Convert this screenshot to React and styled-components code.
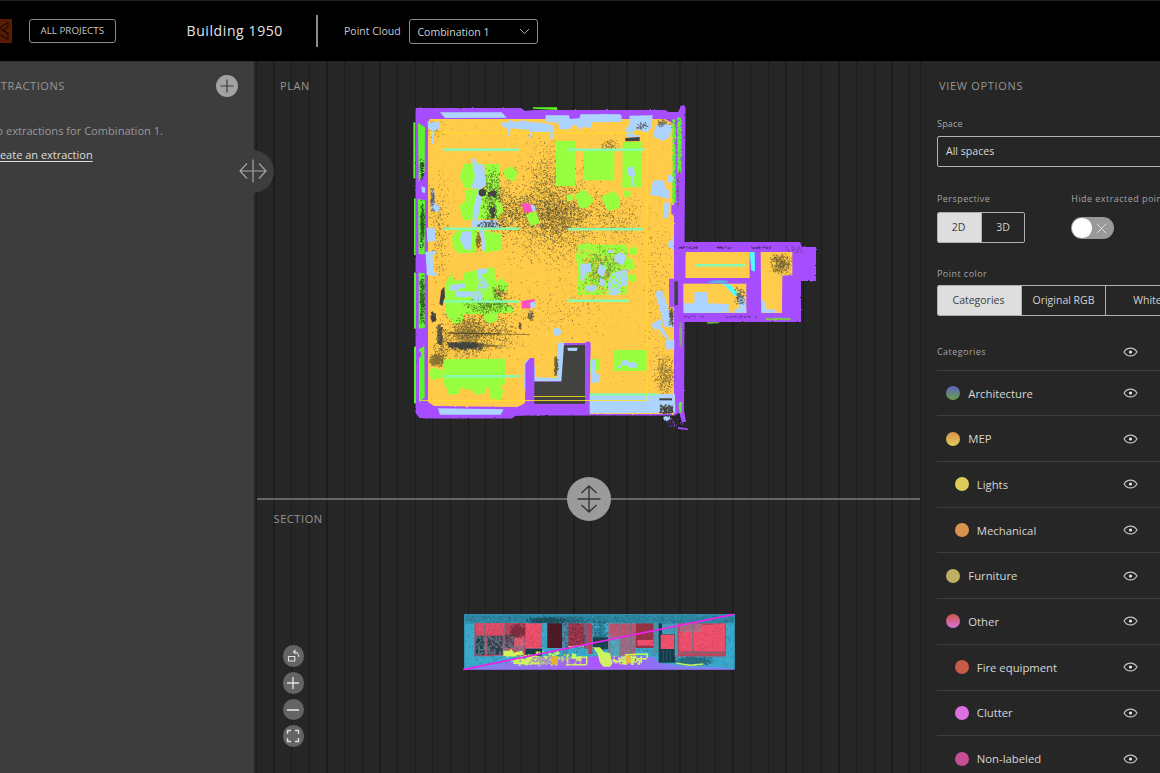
import React from "react";
import styled, { createGlobalStyle, css } from "styled-components";

const Global = createGlobalStyle`
  * { box-sizing: border-box; }
  html, body { margin: 0; background: #262626; overflow: hidden; }
  body { font-family: "Open Sans", "Noto Sans", sans-serif; color: #d6d6d6; }
  button { font: inherit; color: inherit; background: none; border: 0; padding: 0; }
  svg { display: block; }
`;

const Page = styled.div`
  width: 1160px;
  height: 773px;
  overflow: hidden;
  display: flex;
  flex-direction: column;
`;

/* ---------- header ---------- */
const Header = styled.header`
  flex: none;
  height: 61px;
  padding-bottom: 1px;
  background: #000;
  border-top: 1px solid #1f2020;
  display: flex;
  align-items: center;
`;
const LogoTile = styled.div`
  width: 12px;
  height: 24px;
  background: #591b02;
  margin-right: 17px;
  margin-top: 1px;
`;
const ProjectsButton = styled.button`
  width: 86.5px;
  height: 24px;
  border: 1px solid #8a8a8a;
  border-radius: 3px;
  font-size: 9.8px;
  letter-spacing: 0;
  white-space: nowrap;
  color: #c6c6c6;
`;
const ProjectTitle = styled.h1`
  margin: 0 0 0 71px;
  width: 129.5px;
  font-size: 14px;
  font-weight: 400;
  letter-spacing: 0.6px;
  white-space: nowrap;
  color: #e4e4e4;
`;
const HeaderRule = styled.div`
  width: 1.5px;
  height: 32px;
  margin-top: 1px;
  background: #8b8b8b;
`;
const HeaderLabel = styled.span`
  margin-left: 26.5px;
  width: 65px;
  font-size: 10.5px;
  white-space: nowrap;
  color: #c8c8c8;
`;
const CloudSelect = styled.button`
  width: 129px;
  height: 25px;
  margin-top: 1px;
  padding: 1px 7px 0 7.5px;
  border: 1px solid #8a8a8a;
  border-radius: 3px;
  display: flex;
  align-items: center;
  justify-content: space-between;
  font-size: 10.5px;
  color: #d2d2d2;
`;

/* ---------- body ---------- */
const Body = styled.div`
  flex: 1;
  min-height: 0;
  display: grid;
  grid-template-columns: 253.5px 667.5px 1fr;
`;
const Sidebar = styled.aside`
  position: relative;
  z-index: 2;
  background: #3d3d3d;
  border-top: 1px solid #353535;
`;
const SidebarHead = styled.div`
  height: 48px;
  padding: 0 16px 0 0;
  display: flex;
  align-items: center;
  justify-content: space-between;
`;
const PanelTitle = styled.h2`
  margin: 0;
  font-size: 11px;
  font-weight: 400;
  letter-spacing: 0.6px;
  line-height: 15px;
  white-space: nowrap;
  color: #969696;
`;
const ClippedTitle = styled(PanelTitle)`
  margin: -1px 0 0 -12.8px;
`;
const AddButton = styled.button`
  width: 22px;
  height: 22px;
  border-radius: 50%;
  background: #a2a2a2;
  display: grid;
  place-items: center;
`;
const EmptyNote = styled.p`
  margin: 13px 0 0 -12px;
  font-size: 11.1px;
  line-height: 16px;
  white-space: nowrap;
  color: #999;
`;
const CreateLink = styled.a`
  display: block;
  margin: 8px 0 0 -11.5px;
  width: max-content;
  font-size: 11px;
  line-height: 16px;
  text-decoration: underline;
  text-underline-offset: 2px;
  color: #dcdcdc;
`;
const SidebarHandle = styled.div`
  position: absolute;
  right: -20.5px;
  top: 87.5px;
  width: 43px;
  height: 43px;
  border-radius: 50%;
  background: #3d3d3d;
  display: grid;
  place-items: center;
`;

const Canvas = styled.main`
  position: relative;
  display: flex;
  flex-direction: column;
  background: repeating-linear-gradient(90deg, #262626 0 1.6px, #1c1c1c 1.6px 2.9px, #262626 2.9px 17.66px);
  border-right: 1px solid #1c1c1c;
`;
const PlanView = styled.section`
  height: 436.6px;
  padding: 17px 0 0 26.5px;
`;
const SectionView = styled.section`
  flex: 1;
  padding: 11.4px 0 0 20px;
`;
const PlanDrawing = styled.svg`
  width: 410px;
  height: 335px;
  margin: 7px 0 0 130px;
`;
const SectionDrawing = styled.svg`
  width: 280px;
  height: 64px;
  margin: 83.6px 0 0 186.5px;
`;
const Divider = styled.div`
  height: 2px;
  margin-left: 3px;
  background: #666;
  display: flex;
  align-items: center;
  justify-content: center;
  padding-left: 2px;
`;
const DividerKnob = styled.div`
  flex: none;
  width: 44px;
  height: 44px;
  border-radius: 50%;
  background: #9b9b9b;
  display: grid;
  place-items: center;
`;
const ZoomTools = styled.div`
  position: absolute;
  left: 29px;
  bottom: 26px;
  display: flex;
  flex-direction: column;
  gap: 5.1px;
`;
const ZoomButton = styled.button`
  width: 21.6px;
  height: 21.6px;
  border-radius: 50%;
  background: #646464;
  display: grid;
  place-items: center;
`;

/* ---------- view options ---------- */
const Options = styled.aside`
  padding: 17px 0 0 16px;
  background: #262626;
  overflow: hidden;
  white-space: nowrap;
`;
const OptionsTitle = styled(PanelTitle)`
  margin-left: 2px;
  letter-spacing: 0.68px;
`;
const FieldLabel = styled.div`
  font-size: 9px;
  line-height: 12px;
  letter-spacing: ${(p) => p.$spacing || "0.45px"};
  color: #a4a4a4;
`;
const SpaceField = styled.div`
  margin-top: 25px;
`;
const SpaceSelect = styled.div`
  margin-top: 6px;
  width: 260px;
  height: 30.5px;
  padding-left: 8px;
  border: 1px solid #b3b3b3;
  border-radius: 2px;
  font-size: 10.6px;
  line-height: 28px;
  color: #d8d8d8;
`;
const PairRow = styled.div`
  display: grid;
  grid-template-columns: 134.3px 1fr;
  margin-top: 26.5px;
`;
const ColorField = styled.div`
  margin-top: 25.5px;
`;
const Segmented = styled.div`
  margin-top: ${(p) => p.$top};
  width: max-content;
  height: 30.5px;
  display: flex;
  border: 1px solid #b0b0b0;
  border-radius: 2px;
  overflow: hidden;
`;
const Segment = styled.button`
  width: ${(p) => p.$w}px;
  padding-bottom: 1px;
  font-size: 10.5px;
  color: #d2d2d2;
  & + & { border-left: 1px solid #b0b0b0; }
  ${(p) => p.$on && css`
    background: #dedede;
    color: #3d3d3d;
    padding-right: 2px;
  `}
`;
const Toggle = styled.div`
  margin-top: 12px;
  width: 43px;
  height: 22px;
  padding: 0 7px 0 1px;
  border-radius: 11px;
  background: #999;
  display: flex;
  align-items: center;
  justify-content: space-between;
`;
const ToggleKnob = styled.span`
  width: 19.5px;
  height: 19.5px;
  border-radius: 50%;
  background: #fff;
`;
const CategoryHead = styled.div`
  height: 54.2px;
  padding: 18px 24px 0 0;
  display: flex;
  align-items: center;
  justify-content: space-between;
  width: 224.5px;
`;
const CategoryRow = styled.div`
  height: 45.7px;
  width: 230.5px;
  padding: 0 30px 0 ${(p) => (p.$nested ? 17.5 : 9)}px;
  border-top: 1px solid #3e3e3e;
  display: flex;
  align-items: center;
  font-size: 11.3px;
  color: #d6d6d6;
`;
const Swatch = styled.span`
  width: 14px;
  height: 14px;
  margin-right: 8.3px;
  border-radius: 50%;
  background: ${(p) => p.$fill};
`;
const CategoryName = styled.span`
  flex: 1;
`;

const Eye = () => (
  <svg width="15" height="10" viewBox="0 0 15 10" fill="none" stroke="#c4c4c4" strokeWidth="1.15">
    <path d="M1 5C2.6 2.3 4.8 1.1 7.5 1.1S12.4 2.3 14 5C12.4 7.7 10.2 8.9 7.5 8.9S2.6 7.7 1 5Z" />
    <circle cx="7.5" cy="5" r="1.6" fill="#e8e8e8" stroke="none" />
  </svg>
);

const categories = [
  { name: "Architecture", fill: "linear-gradient(#5b63c4, #6ba048)" },
  { name: "MEP", fill: "linear-gradient(#dc914b, #e2cb57)" },
  { name: "Lights", fill: "#decb57", nested: true },
  { name: "Mechanical", fill: "#da924f", nested: true },
  { name: "Furniture", fill: "#c0ae61" },
  { name: "Other", fill: "linear-gradient(#ca5947, #d970dc)" },
  { name: "Fire equipment", fill: "#c75a48", nested: true },
  { name: "Clutter", fill: "#dc70e0", nested: true },
  { name: "Non-labeled", fill: "#c64f94", nested: true },
];

/* ---------- point cloud scatter ---------- */
function rng(seed) {
  let s = seed;
  return () => {
    s = (s * 1664525 + 1013904223) % 4294967296;
    return s / 4294967296;
  };
}
// Scatter n small points, denser towards the middle of the box unless flat.
function scatter(seed, n, x, y, w, h, size = 1, flat = false) {
  const r = rng(seed);
  let d = "";
  for (let i = 0; i < n; i++) {
    const u = flat ? r() : (r() + r()) / 2;
    const v = flat ? r() : (r() + r()) / 2;
    const s = size * (0.6 + r() * 0.7);
    d += `M${(x + u * w).toFixed(1)} ${(y + v * h).toFixed(1)}h${s.toFixed(1)}v${s.toFixed(1)}h-${s.toFixed(1)}z`;
  }
  return d;
}

const P = "#a64dff", Y = "#ffcb4a", G = "#97ff40", L = "#add4ff", M = "#87fbb0", D = "#424341", N = "#5cf52a";
const Poly = ({ c, p }) => <polygon fill={c} points={p} />;
const Box = ({ c, b, o }) => <rect fill={c} x={b[0]} y={b[1]} width={b[2]} height={b[3]} opacity={o} />;

// [count, x, y, width, height, point size]
const voids = [
  [1700, 498, 155, 105, 110, 0.85], [900, 528, 190, 66, 52, 0.9], [900, 480, 190, 80, 45, 0.85],
  [480, 478, 160, 40, 90, 0.85], [500, 524, 130, 50, 90, 0.8], [300, 427, 170, 24, 120, 0.8],
  [500, 495, 215, 160, 60, 0.7], [420, 430, 275, 115, 90, 0.8], [800, 440, 308, 80, 46, 0.9],
  [260, 432, 325, 20, 45, 0.9], [260, 641, 190, 32, 200, 0.7], [420, 652, 352, 25, 46, 0.85],
  [60, 425, 118, 20, 20, 0.8], [90, 600, 138, 20, 15, 0.9], [80, 652, 117, 25, 18, 0.8],
  [240, 520, 270, 90, 75, 0.7], [180, 590, 190, 30, 45, 0.8], [300, 600, 195, 45, 50, 0.7],
];

function Plan() {
  return (
    <PlanDrawing viewBox="410 100 410 335">
      <defs>
        <filter id="rough" x="-2%" y="-2%" width="104%" height="104%">
          <feTurbulence type="fractalNoise" baseFrequency="0.35" numOctaves="2" seed="4" />
          <feDisplacementMap in="SourceGraphic" scale="2" xChannelSelector="R" yChannelSelector="G" />
        </filter>
      </defs>
      <g filter="url(#rough)">
        <Poly c={P} p="415.5,108 521,108 525,111 534,110 665,110 669,112 678,112 681,106 684,105 685.5,108 684.5,242 800,242 802,247 816,247 816,281 801,281 801,322 684.5,322 684,410 686,422 682,422 679,413 674,415.5 527,415.5 515,416 512,418.5 420,418.5 415.5,413" />
        <Poly c={P} p="678,427 688,428.5 688,430 678,429" />
        <Poly c={Y} p="430,119 665,119 674,124 674,414 590,414 590,343 563,343 563,381 525,381 525,403 518,407 434,406 428,402 428,122" />
      </g>
      <path d={scatter(71, 1300, 429, 123, 244, 280, 0.7, true)} fill="#8a7434" opacity=".5" />
      {voids.map(([n, x, y, w, h, s], i) => (
        <path key={i} d={scatter(i * 977 + 13, n, x, y, w, h, s)} fill="#39372d" opacity=".62" />
      ))}

      <g transform="translate(400 95) scale(.33333)">
        <Poly c={L} p="120,52 305,52 320,68 135,69" />
        <Poly c={L} p="83,83 118,80 118,102 103,105 101,147 96,147 94,105 84,100" />
        <Poly c={L} p="305,82 322,84 330,74 345,82 370,76 392,82 430,83 461,92 460,128 452,136 450,112 397,110 394,130 389,130 388,105 332,100 330,124 324,124 322,99 308,96" />
        <Poly c={L} p="437,61 507,61 510,72 538,70 542,58 660,58 660,80 575,82 575,98 545,96 540,106 530,92 520,90 508,103 478,103 475,84 436,80" />
        <Poly c={N} p="398,37 471,37 472,45 400,41" />
        <Box c={N} b={[40, 82, 6, 168]} /><Poly c={N} p="54,84 75,97 74,230 56,260" />
        <Box c={N} b={[42, 310, 5, 170]} /><Poly c={N} p="54,312 75,316 74,478 56,478" />
        <path d={scatter(5, 260, 58, 312, 15, 155, 3)} fill="#28421c" opacity=".85" />
        <path d={scatter(6, 80, 58, 190, 13, 68, 3)} fill="#28421c" />
        <Poly c={L} p="94,285 102,283 104,325 118,333 117,350 92,348" />
        <path d={scatter(7, 120, 88, 275, 16, 75, 3)} fill="#4a4a52" opacity=".8" />
        <Poly c={L} p="64,274 76,278 75,294 66,292" />
        <Poly c={L} p="80,398 104,398 106,438 82,440" />
        <Poly c={L} p="76,470 110,468 108,477 98,480 99,510 79,510" />
        <Poly c={G} p="192,206 240,204 248,282 195,280 179,246" />
        <Poly c={G} p="254,207 297,207 297,305 256,304" />
        <Poly c={G} p="193,286 235,283 298,300 298,370 190,376 178,334 198,316" />
        <Poly c={G} p="156,425 175,404 235,405 225,474 172,474 158,457" />
        <Poly c={G} p="250,406 305,418 306,465 250,473" />
        <Poly c={G} p="310,226 335,214 352,232 345,258 315,250" />
        <path d={scatter(8, 420, 240, 210, 65, 190, 3.4)} fill="#55532f" opacity=".75" />
        <Poly c={G} p="288,328 304,321 311,350 294,362" />
        <Poly c={L} p="216,192 226,190 233,210 252,207 256,270 244,282 213,280 225,246" />
        <Poly c={L} p="235,284 246,310 232,376 217,370 224,325" />
        <Poly c={L} p="216,376 294,376 296,398 213,397" />
        <Poly c={L} p="185,410 214,408 212,465 196,464 180,434" />
        <Poly c={L} p="240,405 252,405 256,464 244,466" />
        <path d={scatter(9, 110, 225, 405, 18, 65, 3)} fill="#6b4e24" opacity=".85" />
        <circle cx="247" cy="293" r="11" fill={D} />
        <path d={scatter(10, 90, 262, 286, 28, 18, 4)} fill={D} />
        <path d={scatter(11, 80, 266, 330, 18, 38, 4)} fill={D} />
        <path d={scatter(12, 70, 225, 375, 84, 26, 4)} fill={D} opacity=".8" />
        <Poly c={G} p="467,137 525,138 525,274 467,272" /><Box c={G} b={[551, 166, 92, 90]} />
        <Poly c={G} p="524,300 553,282 582,315 562,338 540,340" />
        <Poly c={G} p="603,306 642,288 660,310 660,338 625,348" />
        <Poly c={G} p="498,303 516,296 523,312 504,320" />
        <Poly c={L} p="388,328 406,332 407,348 388,350" /><Poly c="#ff4fc2" p="363,325 390,325 398,350 375,353" />
        <Poly c={G} p="377,360 407,348 421,384 392,392" />
        <Poly c={G} p="533,449 683,449 683,600 533,600" />
        <Poly c={G} p="525,480 550,445 582,448 583,468 550,505 530,500" />
        <path d={scatter(20, 300, 533, 450, 150, 150, 5, true)} fill={Y} opacity=".8" />
        <path d={scatter(21, 900, 535, 450, 150, 150, 2.6)} fill="#606929" opacity=".7" />
        <Poly c={L} p="625,465 642,467 640,474 624,474" />
        <Poly c={L} p="643,482 662,472 679,482 670,510 644,500" />
      </g>

      <g transform="translate(600 95) scale(.33333)">
        <Poly c={L} p="0,58 65,60 64,80 0,82" />
        <Poly c={L} p="88,62 158,61 155,96 140,114 118,104 104,106 98,118 120,122 120,128 80,126 78,98 90,90" />
        <Poly c={L} p="166,90 178,92 185,82 215,92 210,126 190,138 160,125" />
        <path d={scatter(23, 40, 104, 80, 44, 24, 3)} fill={D} opacity=".8" />
        <path d={scatter(24, 70, 170, 70, 30, 26, 3)} fill={D} opacity=".6" />
        <Poly c={D} p="76,129 119,126 119,138 76,139" />
        <Poly c={G} p="68,141 125,140 125,277 67,278" />
        <Poly c={L} p="82,220 100,213 106,240 100,246 104,276 97,273 94,245 83,240" />
        <Poly c={G} p="6,305 43,290 61,327 23,348" /><Poly c={G} p="72,287 92,289 91,306 73,306" />
        <Poly c={L} p="160,256 192,256 196,282 209,288 205,313 178,304 150,300" />
        <Poly c={L} p="203,240 222,240 222,265 203,262" /><Poly c={L} p="193,321 209,324 204,370 191,370" />
        <Poly c={L} p="217,424 220,465 202,452" />
        <Poly c={P} p="214,330 226,330 226,358 214,358" />
        <path d={scatter(30, 300, 216, 72, 8, 250, 4, true)} fill={N} />
        <path d={scatter(31, 260, 231, 66, 10, 165, 4, true)} fill={N} />
        <path d={scatter(32, 40, 229, 220, 8, 135, 3)} fill="#56613e" />
        <path d={scatter(33, 60, 235, 454, 60, 6, 2.5, true)} fill="#4b2f70" />
        <path d={scatter(36, 40, 350, 454, 45, 6, 2.5, true)} fill="#4b2f70" />
        <path d={scatter(37, 60, 450, 454, 60, 6, 2.5, true)} fill="#4b2f70" />
        <path d={scatter(38, 40, 550, 454, 60, 18, 2.5, true)} fill="#4b2f70" opacity=".7" />
        <circle cx="100" cy="468" r="12" fill={G} /><circle cx="88" cy="503" r="13" fill={G} />
        <Box c={Y} b={[257, 471, 192, 78]} /><Poly c="#4dffff" p="449,471 464,471 464,530 454,526" />
        <Poly c={Y} p="482,471 577,471 577,540 547,542 546,654 484,654" />
        <path d={scatter(34, 420, 507, 470, 70, 70, 2.6)} fill="#4b402a" opacity=".75" />
      </g>

      <g transform="translate(400 260) scale(.33333)">
        <Poly c={N} p="42,38 48,38 48,206 42,206" /><Poly c={N} p="56,38 74,40 74,204 56,206" />
        <path d={scatter(40, 300, 57, 38, 17, 165, 3)} fill="#2c4b22" opacity=".85" />
        <Poly c={N} p="42,260 48,260 48,430 42,430" /><Poly c={N} p="57,268 73,258 74,412 57,428" />
        <Poly c={P} p="50,285 62,272 64,288 54,296" />
        <Poly c={L} p="79,0 100,0 101,36 113,40 110,48 80,45" />
        <Poly c={G} p="137,70 152,42 164,62 190,60 193,38 240,28 283,22 287,98 320,135 342,140 340,158 295,160 292,182 270,190 254,182 252,162 190,162 188,186 165,192 150,180 138,160" />
        <Poly c={G} p="287,65 303,55 326,72 318,97 292,94" />
        <Poly c={L} p="232,26 263,26 264,38 246,42 267,80 262,90 247,83 248,118 222,128 217,110 170,112 165,92 148,90 148,76 192,70 198,80 165,92 228,96 236,60" />
        <path d={scatter(41, 120, 205, 30, 70, 100, 3)} fill={G} />
        <path d={scatter(42, 300, 180, 112, 165, 48, 3)} fill="#4d6126" opacity=".8" />
        <path d={scatter(43, 110, 270, 70, 55, 50, 3)} fill="#3f3a2a" opacity=".7" />
        <Poly c={D} p="124,90 133,80 135,110 127,138 118,132" />
        <Poly c="#ff4fc2" p="364,123 404,117 404,128 388,146 366,144" /><Poly c={L} p="390,128 406,124 407,142 392,144" />
        <path d={scatter(44, 90, 90, 153, 16, 32, 4)} fill={D} /><path d={scatter(49, 60, 380, 150, 22, 30, 3)} fill={D} opacity=".8" />
        <path d={scatter(39, 40, 354, 185, 10, 22, 3)} fill={D} opacity=".8" />
        <path d={scatter(45, 800, 150, 160, 100, 140, 3)} fill="#5a4d2b" opacity=".6" />
        <path d="M145 219L390 224" stroke="#6d5f35" strokeWidth="2" />
        <path d="M142 219L300 222" stroke="#55492b" strokeWidth="3" />
        <path d={scatter(64, 420, 140, 244, 112, 24, 3.4)} fill={D} />
        <path d="M140 246L190 250L250 251L244 262L185 264L143 256Z" fill={D} opacity=".85" />
        <path d="M235 250L310 258L230 264" fill="#6d5f35" opacity=".7" />
        <path d={scatter(46, 150, 108, 185, 18, 75, 4)} fill={D} opacity=".85" />
        <path d={scatter(47, 220, 85, 278, 48, 42, 4)} fill="#655528" opacity=".75" />
        <Poly c={G} p="130,298 318,296 317,372 300,376 310,392 302,420 272,416 268,386 257,380 256,398 230,405 214,390 180,384 176,402 146,404 138,380 130,372" />
        <Poly c={G} p="84,340 98,323 128,330 128,354 98,360" />
        <Poly c={L} p="114,445 311,448 302,464 120,464" />
        <Poly c={L} p="374,305 392,294 385,430 372,380" />
        <Poly c={L} p="400,315 408,322 406,352 474,354 474,250 492,245 490,364 402,364" />
        <path d={scatter(48, 150, 460, 285, 14, 65, 3)} fill="#6d5f35" />
        <circle cx="471" cy="215" r="12" fill={L} />
        <Poly c={D} p="402,365 484,365 492,256 555,254 555,432 402,432" />
        <Poly c={L} p="502,263 533,263 530,273 504,272" />
        <Poly c={P} p="376,312 390,294 403,294 403,435 376,435" />
        <Poly c={P} p="555,248 565,244 572,248 569,462 555,462" />
        <Poly c={G} p="571,298 597,296 600,330 570,338" />
        <Poly c={L} p="572,298 586,300 588,340 601,345 598,366 573,370" />
        <Poly c={L} p="569,402 660,402 660,458 569,460" />
        <Poly c={L} p="541,12 572,10 574,34 555,42 552,66 542,60" />
        <Poly c={L} p="556,78 590,76 588,94 560,94" />
        <Poly c={L} p="598,12 620,20 610,52 592,40" />
      </g>

      <g transform="translate(600 260) scale(.33333)">
        <Poly c={L} p="35,40 60,32 84,28 82,76 62,82 60,106 27,106 24,70" />
        <Poly c={L} p="0,52 14,62 14,80 0,76" />
        <path d={scatter(50, 80, 0, 0, 80, 104, 4)} fill={G} />
        <circle cx="93" cy="19" r="11" fill={G} /><circle cx="97" cy="54" r="12" fill={G} />
        <Box c={Y} b={[257, -10, 190, 64]} /><Poly c="#4dffff" p="453,-3 464,-3 463,30 454,29" />
        <Box c={Y} b={[250, 71, 189, 88]} />
        <Poly c={L} p="252,130 283,130 283,96 323,96 324,130 386,132 386,158 252,159" />
        <Poly c="#4dffff" p="370,72 390,73 420,106 403,107" />
        <Poly c={L} p="410,112 432,106 440,158 396,158 418,140" />
        <path d={scatter(52, 110, 402, 78, 34, 62, 3.4)} fill="#5a5a55" opacity=".85" />
        <Poly c={L} p="484,114 495,128 498,146 528,150 530,158 485,158" />
        <Poly c={P} p="207,56 222,56 222,142 208,142" /><Box c={D} b={[223, 64, 11, 72]} />
        <Poly c={L} p="165,96 186,90 210,162 222,166 222,203 194,200" />
        <Poly c={L} p="153,194 180,176 188,184 186,202 208,236 200,238 174,206 162,208" />
        <Poly c={L} p="197,241 223,239 223,267 198,268" />
        <path d={scatter(53, 110, 204, 138, 18, 60, 3)} fill="#5d5135" />
        <Box c={G} b={[40, 270, 101, 63]} />
        <Poly c={L} p="64,304 76,298 86,306 110,308 110,324 84,322 80,314 68,318" /><circle cx="58" cy="319" r="5" fill={L} />
        <Poly c={L} p="0,402 225,402 226,458 0,460" />
        <path d={scatter(55, 110, 178, 433, 38, 24, 4, true)} fill={D} /><Box c={D} b={[178, 415, 38, 6]} />
        <path d={scatter(56, 60, 188, 468, 20, 10, 4)} fill={L} />
        <path d={scatter(57, 30, 190, 470, 65, 35, 3)} fill={P} opacity=".7" />
        <path d={scatter(58, 120, 236, 185, 8, 80, 3)} fill="#8aad65" />
        <path d={scatter(59, 60, 235, 422, 9, 38, 3)} fill={N} />
        <path d={scatter(60, 130, 320, 60, 65, 8, 3)} fill="#55b6e8" />
        <path d={scatter(61, 150, 497, 173, 72, 5, 3, true)} fill="#78c84a" />
        <path d={scatter(62, 60, 318, 185, 42, 4, 3)} fill="#65b844" />
        <path d={scatter(63, 30, 250, 166, 60, 6, 2.5, true)} fill="#5d3592" />
        <path d={scatter(65, 50, 370, 166, 100, 6, 2.5, true)} fill="#5d3592" />
      </g>
      <path d="M443.5 149.8H519.5M443.5 228.8H519.5M443.5 301.5H519.5M443.5 376.2H519.5M567.5 149.8H644.5M568 229.2H644M568 300.7H629M696 265.3H746M590 394.5H657" stroke={M} strokeWidth="2.5" fill="none" />
      <path d="M429 133H647V400.5H421M534 396.5H585" stroke="#ffe21f" strokeWidth="1" opacity=".85" fill="none" />
    </PlanDrawing>
  );
}

function SectionCut() {
  const R = "#ef506c", C = "#3aa9cb", K = "#173c48", W = "#d5ff58";
  return (
    <SectionDrawing viewBox="460 610 280 64">
      <defs>
        <linearGradient id="floor" x1="0" x2="1"><stop offset="0" stopColor="#7e88e8" /><stop offset=".5" stopColor="#ad55ff" /><stop offset="1" stopColor="#5d9be8" /></linearGradient>
      </defs>
      <g transform="translate(450 600) scale(.33333)">
        <Box c={C} b={[43, 43, 811, 165]} />
        <Box c={K} b={[44, 44, 809, 24]} o={0.22} />
        <path d={scatter(80, 1900, 43, 44, 810, 26, 3, true)} fill="#17495a" opacity=".3" />
        <path d={scatter(81, 1400, 43, 44, 810, 162, 3, true)} fill="#17495a" opacity=".35" />
        <path d={scatter(79, 420, 220, 50, 130, 20, 3)} fill={K} opacity=".6" />
        <Poly c="url(#floor)" p="60,208 180,186 260,172 340,176 450,168 610,170 628,188 700,198 800,200 854,208" />
        <path d={scatter(82, 300, 240, 48, 190, 24, 4)} fill={K} opacity=".4" />
        <Box c="#b84860" b={[75, 69, 152, 98]} />
        <Box c={K} b={[77, 108, 27, 58]} /><Box c={K} b={[112, 108, 46, 56]} o={0.85} /><Box c={K} b={[165, 104, 28, 40]} o={0.6} />
        <path d={scatter(83, 280, 75, 105, 150, 62, 5, true)} fill="#7b91a3" opacity=".6" />
        <Box c={R} b={[76, 70, 88, 34]} o={0.75} /><Box c="#e05f75" b={[193, 110, 28, 28]} />
        <path d={scatter(84, 300, 175, 69, 54, 45, 4)} fill="#4a1824" opacity=".55" />
        <Box c={R} b={[227, 70, 49, 76]} /><Box c={K} b={[226, 146, 50, 21]} />
        <Box c={C} b={[276, 69, 16, 92]} /><Box c="#4d1723" b={[292, 70, 44, 74]} />
        <Box c="#438fae" b={[337, 70, 18, 98]} /><Box c="#a73a50" b={[355, 70, 47, 69]} />
        <Box c="#7b6078" b={[402, 70, 14, 76]} /><Box c="#c73a55" b={[415, 70, 12, 92]} />
        <path d={scatter(85, 300, 292, 69, 112, 73, 4, true)} fill="#45202e" opacity=".4" />
        <Box c={K} b={[429, 112, 45, 36]} o={0.9} /><path d={scatter(86, 170, 420, 48, 54, 110, 5)} fill={K} opacity=".45" />
        <Box c="#9c6d87" b={[475, 70, 80, 98]} /><Box c="#54a6bd" b={[480, 115, 30, 55]} />
        <Box c="#c94d66" b={[480, 72, 76, 35]} o={0.7} />
        <Box c="#963348" b={[557, 70, 55, 74]} /><Box c="#5191a8" b={[610, 70, 14, 90]} />
        <Box c={K} b={[626, 70, 50, 118]} /><Box c="#429fba" b={[636, 70, 38, 33]} />
        <Box c={R} b={[632, 104, 41, 43]} /><Box c={R} b={[562, 120, 48, 17]} />
        <Box c="#4f9db5" b={[674, 70, 12, 100]} />
        <Box c="#bb4a62" b={[683, 70, 143, 98]} /><Poly c={R} p="688,100 750,78 826,70 826,154 688,154" />
        <Box c="#a27a91" b={[690, 72, 66, 24]} o={0.7} />
        <path d={scatter(87, 900, 76, 70, 350, 70, 2.5, true)} fill="#6c2b3c" opacity=".3" />
        <path d={scatter(88, 900, 476, 70, 350, 95, 2.5, true)} fill="#6c2b3c" opacity=".25" />
        <path d="M104 70V166M164 70V160M510 70V168M542 70V168M728 70V160M683 158H826" stroke="#57798a" strokeWidth="3" opacity=".7" />
        <path d="M75 70V167H130M826 70V168H676" stroke="#b93d59" strokeWidth="3" fill="none" />
        <path d="M640 150V190M650 150V190M661 150V190" stroke="#235769" strokeWidth="3" />
        <path d={scatter(89, 260, 670, 168, 120, 26, 5)} fill={K} opacity=".55" />
        <g opacity=".92">
          <Poly c={W} p="160,152 178,152 184,146 190,158 216,152 222,164 200,166 190,170 160,168" />
          <Poly c={W} p="190,180 206,172 222,178 240,168 262,168 274,176 300,170 302,192 240,194 190,192" />
          <Poly c={W} p="428,142 450,142 462,156 480,160 484,178 488,190 480,200 460,200 450,188 442,160" />
          <path d="M352 168V196M410 168V194M354 194H408M374 192L384 174L392 190M362 172H408M355 141L402 137" stroke={W} strokeWidth="4.5" fill="none" />
          <path d="M528 164L592 162V174M520 186H560M552 164V186M494 184H530M508 172V190M560 176H590M574 168V190M680 190L720 196L760 192" stroke={W} strokeWidth="4.5" fill="none" />
          <path d={scatter(90, 130, 170, 150, 240, 46, 6)} fill={W} />
          <path d={scatter(91, 70, 480, 160, 110, 32, 6)} fill={W} />
        </g>
        <path d={scatter(92, 130, 200, 166, 200, 28, 5)} fill="#9b7bd0" opacity=".8" />
        <Box c="#e6b034" b={[304, 168, 20, 26]} /><Box c="#e6b034" b={[528, 166, 14, 25]} o={0.8} />
        <path d="M44 207V44H853V207" stroke="#3494b3" strokeWidth="3" fill="none" /><path d="M44 208H853" stroke="#9363e8" strokeWidth="3" />
        <path d="M42 208L851 43" stroke="#ea24e8" strokeWidth="5.5" strokeLinecap="round" />
      </g>
    </SectionDrawing>
  );
}

export default function App() {
  return (
    <Page>
      <Global />
      <Header>
        <LogoTile>
          <svg width="12" height="24" fill="none" stroke="#210b03" strokeWidth="1.2">
            <path d="M8 3.5L0 8.5M8 3.5V8L2.5 11.5L8 15V20.5L0 15.5M0 9L8 14" />
          </svg>
        </LogoTile>
        <ProjectsButton>ALL PROJECTS</ProjectsButton>
        <ProjectTitle>Building 1950</ProjectTitle>
        <HeaderRule />
        <HeaderLabel>Point Cloud</HeaderLabel>
        <CloudSelect>
          Combination 1
          <svg width="11" height="7" fill="none" stroke="#aaa" strokeWidth="1"><path d="M1 1L5.5 5.7L10 1" /></svg>
        </CloudSelect>
      </Header>
      <Body>
        <Sidebar>
          <SidebarHead>
            <ClippedTitle>EXTRACTIONS</ClippedTitle>
            <AddButton aria-label="Add extraction">
              <svg width="14" height="14" stroke="#3b3b3b" strokeWidth="1.2"><path d="M7 .5V13.5M.5 7H13.5" /></svg>
            </AddButton>
          </SidebarHead>
          <EmptyNote>No extractions for Combination 1.</EmptyNote>
          <CreateLink>Create an extraction</CreateLink>
          <SidebarHandle>
            <svg width="28" height="24" fill="none" stroke="#a5a5a5" strokeWidth="1.2">
              <path d="M14 .5V23.5M1 12H27M8 4.5L1 12L8 19.5M20 4.5L27 12L20 19.5" />
            </svg>
          </SidebarHandle>
        </Sidebar>
        <Canvas>
          <PlanView>
            <PanelTitle>PLAN</PanelTitle>
            <Plan />
          </PlanView>
          <Divider>
            <DividerKnob>
              <svg width="24" height="28" fill="none" stroke="#343434" strokeWidth="1.4">
                <path d="M12 1V27M.5 14H23.5M4.5 8L12 1L19.5 8M4.5 20L12 27L19.5 20" />
              </svg>
            </DividerKnob>
          </Divider>
          <SectionView>
            <PanelTitle>SECTION</PanelTitle>
            <SectionCut />
          </SectionView>
          <ZoomTools>
            <ZoomButton aria-label="Rotate">
              <svg width="14" height="14" fill="none" stroke="#dedede" strokeWidth="1.1">
                <path d="M2.5 7.5H8.8V12H2.5ZM8 2.8C10.5 3 12.5 5 13 8M9.5 .8L7.5 2.8L9.5 4.8" />
              </svg>
            </ZoomButton>
            <ZoomButton aria-label="Zoom in">
              <svg width="14" height="14" stroke="#dedede" strokeWidth="1.4"><path d="M7 1V13M1 7H13" /></svg>
            </ZoomButton>
            <ZoomButton aria-label="Zoom out">
              <svg width="14" height="14" stroke="#dedede" strokeWidth="1.7"><path d="M1 7H13" /></svg>
            </ZoomButton>
            <ZoomButton aria-label="Fit">
              <svg width="14" height="14" fill="none" stroke="#dedede" strokeWidth="1.4">
                <path d="M1.5 5V1.5H5M9 1.5H12.5V5M12.5 9V12.5H9M5 12.5H1.5V9" />
              </svg>
            </ZoomButton>
          </ZoomTools>
        </Canvas>
        <Options>
          <OptionsTitle>VIEW OPTIONS</OptionsTitle>
          <SpaceField>
            <FieldLabel $spacing="0.2px">Space</FieldLabel>
            <SpaceSelect>All spaces</SpaceSelect>
          </SpaceField>
          <PairRow>
            <div>
              <FieldLabel>Perspective</FieldLabel>
              <Segmented $top="7px">
                <Segment $w={43} $on>2D</Segment>
                <Segment $w={43}>3D</Segment>
              </Segmented>
            </div>
            <div>
              <FieldLabel>Hide extracted points</FieldLabel>
              <Toggle>
                <ToggleKnob />
                <svg width="11" height="11" stroke="#e0e0e0" strokeWidth="1"><path d="M.8 .8L10.2 10.2M10.2 .8L.8 10.2" /></svg>
              </Toggle>
            </div>
          </PairRow>
          <ColorField>
            <FieldLabel>Point color</FieldLabel>
            <Segmented $top="5px">
              <Segment $w={83} $on>Categories</Segment>
              <Segment $w={84}>Original RGB</Segment>
              <Segment $w={84}>White</Segment>
            </Segmented>
          </ColorField>
          <CategoryHead>
            <FieldLabel>Categories</FieldLabel>
            <Eye />
          </CategoryHead>
          {categories.map((c) => (
            <CategoryRow key={c.name} $nested={c.nested}>
              <Swatch $fill={c.fill} />
              <CategoryName>{c.name}</CategoryName>
              <Eye />
            </CategoryRow>
          ))}
        </Options>
      </Body>
    </Page>
  );
}
